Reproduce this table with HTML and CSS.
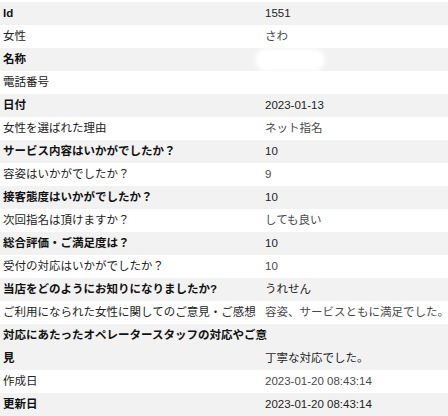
FILE: index.html
```html
<!DOCTYPE html>
<html lang="ja">
<head>
<meta charset="utf-8">
<link rel="stylesheet" href="styles.css">
</head>
<body>
<table class="detail">
  <colgroup><col class="col-label"><col class="col-value"></colgroup>
  <tbody>
    <tr><th>Id</th><td>1551</td></tr>
    <tr><th>女性</th><td>さわ</td></tr>
    <tr><th>名称</th><td><span class="masked"></span></td></tr>
    <tr><th>電話番号</th><td></td></tr>
    <tr><th>日付</th><td>2023-01-13</td></tr>
    <tr><th>女性を選ばれた理由</th><td>ネット指名</td></tr>
    <tr><th>サービス内容はいかがでしたか？</th><td>10</td></tr>
    <tr><th>容姿はいかがでしたか？</th><td>9</td></tr>
    <tr><th>接客態度はいかがでしたか？</th><td>10</td></tr>
    <tr><th>次回指名は頂けますか？</th><td>しても良い</td></tr>
    <tr><th>総合評価・ご満足度は？</th><td>10</td></tr>
    <tr><th>受付の対応はいかがでしたか？</th><td>10</td></tr>
    <tr><th>当店をどのようにお知りになりましたか?</th><td>うれせん</td></tr>
    <tr><th>ご利用になられた女性に関してのご意見・ご感想</th><td>容姿、サービスともに満足でした。</td></tr>
    <tr><th>対応にあたったオペレータースタッフの対応やご意<br>見</th><td>丁寧な対応でした。</td></tr>
    <tr><th>作成日</th><td>2023-01-20 08:43:14</td></tr>
    <tr><th>更新日</th><td>2023-01-20 08:43:14</td></tr>
  </tbody>
</table>
</body>
</html>
```

FILE: styles.css
```css
html, body {
  margin: 0;
  padding: 0;
  background: #ffffff;
}
body {
  padding-top: 2px;
  font-family: "Liberation Sans", "Noto Sans CJK JP", sans-serif;
  font-size: 11.5px;
  color: #222;
}
.detail {
  width: 448px;
  border-collapse: collapse;
  table-layout: fixed;
}
.col-label { width: 264px; }
.detail th,
.detail td {
  padding: 0;
  line-height: 23px;
  vertical-align: bottom;
  text-align: left;
  white-space: nowrap;
  overflow: visible;
}
.detail th {
  padding-left: 3px;
  font-weight: normal;
  color: #222;
}
.detail td {
  padding-left: 1px;
  color: #4a4a4a;
}
.detail tr:nth-child(odd) {
  background: #f2f2f2;
}
.detail tr:nth-child(odd) th {
  font-weight: bold;
  color: #111;
}
.detail tr:nth-child(odd) td {
  color: #222;
}
.masked {
  display: inline-block;
  width: 70px;
  height: 22px;
  margin-left: -10px;
  vertical-align: middle;
  background: #ffffff;
  border-radius: 11px;
  filter: blur(2px);
}
```
